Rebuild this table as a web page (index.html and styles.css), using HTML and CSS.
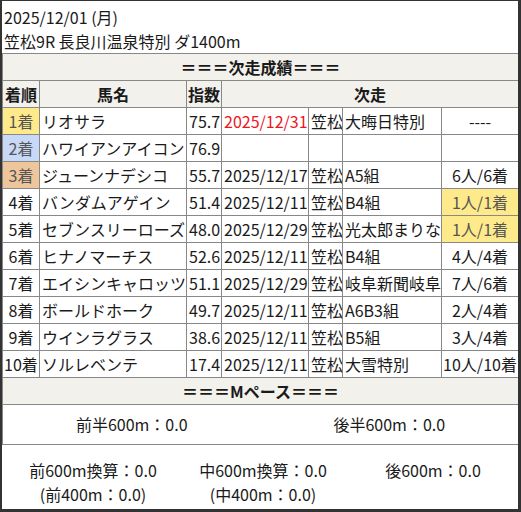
FILE: index.html
```html
<!DOCTYPE html>
<html lang="ja">
<head>
<meta charset="utf-8">
<link rel="stylesheet" href="styles.css">
</head>
<body>
<div class="frame">
  <div class="title">
    <div class="line">2025/12/01 (月)</div>
    <div class="line">笠松9R 長良川温泉特別 ダ1400m</div>
  </div>
  <table class="res">
    <colgroup>
      <col class="c1"><col class="c2"><col class="c3"><col class="c4"><col class="c5"><col class="c6"><col class="c7">
    </colgroup>
    <tr><th colspan="7" class="sec">＝＝＝次走成績＝＝＝</th></tr>
    <tr class="head"><th>着順</th><th>馬名</th><th>指数</th><th colspan="4">次走</th></tr>
    <tr><td class="rk r1">1着</td><td>リオサラ</td><td>75.7</td><td class="red">2025/12/31</td><td>笠松</td><td>大晦日特別</td><td class="ctr">----</td></tr>
    <tr><td class="rk r2">2着</td><td>ハワイアンアイコン</td><td>76.9</td><td></td><td></td><td></td><td></td></tr>
    <tr><td class="rk r3">3着</td><td>ジューンナデシコ</td><td>55.7</td><td>2025/12/17</td><td>笠松</td><td>A5組</td><td class="ctr">6人/6着</td></tr>
    <tr><td class="rk">4着</td><td>バンダムアゲイン</td><td>51.4</td><td>2025/12/11</td><td>笠松</td><td>B4組</td><td class="ctr win">1人/1着</td></tr>
    <tr><td class="rk">5着</td><td>セブンスリーローズ</td><td>48.0</td><td>2025/12/29</td><td>笠松</td><td>光太郎まりな</td><td class="ctr win">1人/1着</td></tr>
    <tr><td class="rk">6着</td><td>ヒナノマーチス</td><td>52.6</td><td>2025/12/11</td><td>笠松</td><td>B4組</td><td class="ctr">4人/4着</td></tr>
    <tr><td class="rk">7着</td><td>エイシンキャロッツ</td><td>51.1</td><td>2025/12/29</td><td>笠松</td><td>岐阜新聞岐阜</td><td class="ctr">7人/6着</td></tr>
    <tr><td class="rk">8着</td><td>ボールドホーク</td><td>49.7</td><td>2025/12/11</td><td>笠松</td><td>A6B3組</td><td class="ctr">2人/4着</td></tr>
    <tr><td class="rk">9着</td><td>ウインラグラス</td><td>38.6</td><td>2025/12/11</td><td>笠松</td><td>B5組</td><td class="ctr">3人/4着</td></tr>
    <tr><td class="rk">10着</td><td>ソルレベンテ</td><td>17.4</td><td>2025/12/11</td><td>笠松</td><td>大雪特別</td><td class="ctr">10人/10着</td></tr>
    <tr><th colspan="7" class="sec">＝＝＝Mペース＝＝＝</th></tr>
    <tr><td colspan="7" class="halves"><div class="halfgrid"><span>前半600m：0.0</span><span>後半600m：0.0</span></div></td></tr>
  </table>
  <div class="detail">
    <div class="dcol"><div>前600m換算：0.0</div><div>(前400m：0.0)</div></div>
    <div class="dcol"><div>中600m換算：0.0</div><div>(中400m：0.0)</div></div>
    <div class="dcol"><div>後600m：0.0</div></div>
  </div>
</div>
</body>
</html>
```

FILE: styles.css
```css
* { box-sizing: border-box; }
html, body { margin: 0; padding: 0; background: #fff; }
body {
  font-family: "Noto Sans CJK JP", "Noto Sans", sans-serif;
  font-size: 16px;
  color: #1a1a1a;
}
.frame {
  width: 521px;
  height: 512px;
  border-style: solid;
  border-color: #333;
  border-width: 1px 3px 3px 2px;
  overflow: hidden;
}
.title { padding: 4px 0 0 2px; }
.title .line { line-height: 24px; height: 24px; white-space: nowrap; }
.res {
  border-collapse: collapse;
  table-layout: fixed;
  width: 516px;
}
.c1 { width: 37px; }
.c2 { width: 147px; }
.c3 { width: 35px; }
.c4 { width: 87px; }
.c5 { width: 34px; }
.c6 { width: 99px; }
.c7 { width: 77px; }
.res th, .res td {
  border: 1px solid #888;
  padding: 0 0 0 2px;
  height: 27px;
  line-height: 25px;
  white-space: nowrap;
  overflow: hidden;
  text-align: left;
  font-weight: normal;
}
.res th { background: #f2f1ec; font-weight: bold; text-align: center; padding: 0; }
.res td.rk { text-align: center; padding: 0; }
.res td.ctr { text-align: center; padding: 0; }
.r1 { background: #fee98b; color: #555; }
.r2 { background: #c7d9f6; color: #555; }
.r3 { background: #efc69c; color: #555; }
.win { background: #fee98b; color: #555; }
.red { color: #f0141e; }
.res td.halves { height: 40px; padding: 0; }
.halfgrid { display: grid; grid-template-columns: 1fr 1fr; text-align: center; }
.detail {
  display: grid;
  grid-template-columns: 1fr 1fr 1fr;
  padding: 13px 0 0 6px;
  text-align: center;
  line-height: 24px;
}
```
